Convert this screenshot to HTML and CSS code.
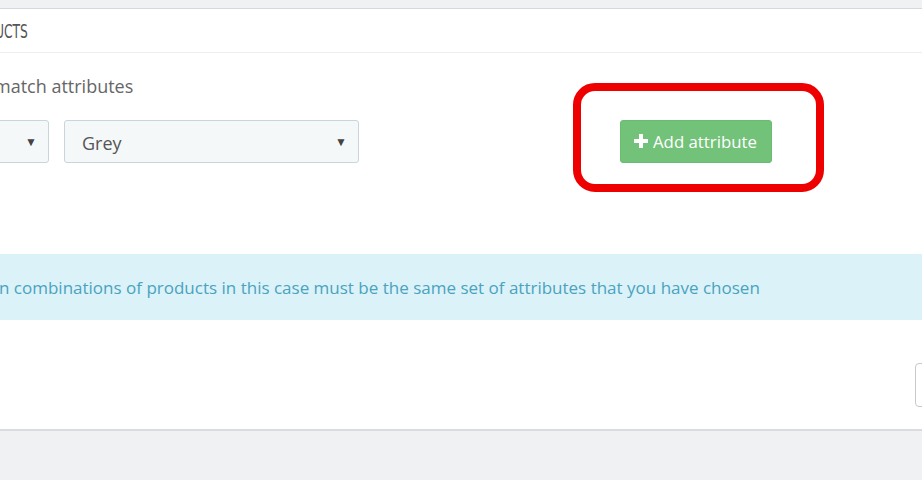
FILE: index.html
```html
<!DOCTYPE html>
<html>
<head>
<meta charset="utf-8">
<link rel="stylesheet" href="styles.css">
</head>
<body>
<div class="page">
  <section class="panel">
    <header class="panel-heading"><span class="heading-text">UCTS</span></header>
    <div class="panel-body">
      <div class="label"><span class="cut-m">match attributes</span></div>
      <div class="row">
        <div class="select select-small"><span class="value"></span><span class="arrow">▼</span></div>
        <div class="select select-wide"><span class="value">Grey</span><span class="arrow">▼</span></div>
        <div class="btn-wrap">
          <button class="btn-add"><svg class="plus" viewBox="0 0 14 14" width="14" height="14"><path d="M5 0h4v5h5v4H9v5H5V9H0V5h5z" fill="#fff"/></svg>Add attribute</button>
          <div class="highlight"></div>
        </div>
      </div>
      <div class="alert"><span class="alert-text">n combinations of products in this case must be the same set of attributes that you have chosen</span></div>
    </div>
    <footer class="panel-footer"><button class="btn-edge"></button></footer>
  </section>
</div>
</body>
</html>
```

FILE: styles.css
```css
html, body {
  margin: 0;
  padding: 0;
}
body {
  background: #eff1f2;
  width: 922px;
  height: 480px;
  overflow: hidden;
  font-family: "Open Sans", "Liberation Sans", sans-serif;
}
.page {
  padding-top: 8px;
}
.panel {
  background: #fff;
  border-top: 1px solid #d5d8dc;
  border-bottom: 2px solid #d9dbde;
}
.panel-heading {
  height: 43px;
  border-bottom: 1px solid #eceeef;
  display: flex;
  align-items: center;
}
.heading-text {
  display: inline-block;
  font-family: "DejaVu Sans Condensed", "DejaVu Sans", sans-serif;
  font-stretch: condensed;
  font-size: 19px;
  color: #555;
  margin-left: -5px;
  margin-top: 1px;
  transform: scaleX(0.72);
  transform-origin: left center;
}
.panel-body {
  padding-top: 21px;
}
.label {
  font-size: 18px;
  color: #666;
  line-height: 24px;
  height: 24px;
}
.cut-m {
  display: inline-block;
  margin-left: -6px;
}
.row {
  display: flex;
  align-items: flex-start;
  margin-top: 22px;
}
.select {
  height: 43px;
  box-sizing: border-box;
  border: 1px solid #c8d5da;
  border-radius: 3px;
  background: #f5f8f9;
  display: flex;
  align-items: center;
  justify-content: space-between;
  padding: 0 11px 0 17px;
  font-size: 18px;
  color: #555;
}
.select-small {
  width: 80px;
  margin-left: -31px;
}
.select-wide {
  width: 295px;
  margin-left: 15px;
}
.value {
  margin-top: 2px;
}
.arrow {
  font-size: 12px;
  color: #444;
}
.btn-wrap {
  position: relative;
  margin-left: 261px;
}
.btn-add {
  width: 152px;
  height: 43px;
  background: #72c279;
  border: 1px solid #6abc71;
  border-radius: 3px;
  color: #fff;
  font-family: "Open Sans", "Liberation Sans", sans-serif;
  font-size: 16.8px;
  display: flex;
  align-items: center;
  padding: 0 0 0 13px;
  gap: 5px;
}
.plus {
  flex: none;
  margin-top: -1px;
}
.highlight {
  position: absolute;
  left: -47px;
  top: -37px;
  width: 251px;
  height: 109px;
  box-sizing: border-box;
  border: 8px solid #ee0000;
  border-radius: 22px;
}
.alert {
  margin-top: 91px;
  height: 66px;
  background: #dbf2f9;
  display: flex;
  align-items: center;
}
.alert-text {
  font-size: 17px;
  color: #4aa3be;
  margin-left: -1px;
  margin-top: 1px;
  white-space: nowrap;
}
.panel-footer {
  height: 109px;
  display: flex;
  justify-content: flex-end;
  align-items: flex-start;
}
.btn-edge {
  margin-top: 43px;
  margin-right: -40px;
  width: 47px;
  height: 44px;
  background: #fff;
  border: 1px solid #c9c9c9;
  border-radius: 4px;
}
```
